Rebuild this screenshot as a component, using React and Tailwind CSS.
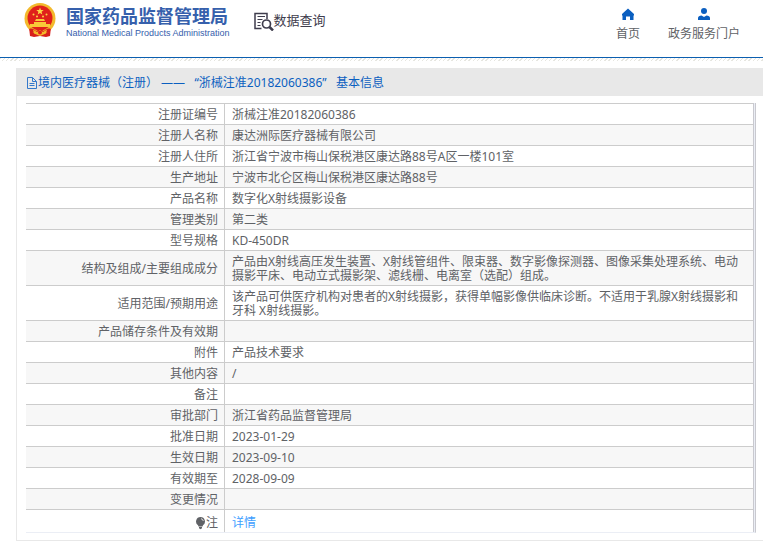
import React from "react";

const rows = [
  { label: "注册证编号", value: "浙械注准20182060386" },
  { label: "注册人名称", value: "康达洲际医疗器械有限公司" },
  { label: "注册人住所", value: "浙江省宁波市梅山保税港区康达路88号A区一楼101室" },
  { label: "生产地址", value: "宁波市北仑区梅山保税港区康达路88号" },
  { label: "产品名称", value: "数字化X射线摄影设备" },
  { label: "管理类别", value: "第二类" },
  { label: "型号规格", value: "KD-450DR" },
  {
    label: "结构及组成/主要组成成分",
    value:
      "产品由X射线高压发生装置、X射线管组件、限束器、数字影像探测器、图像采集处理系统、电动摄影平床、电动立式摄影架、滤线栅、电离室（选配）组成。",
  },
  {
    label: "适用范围/预期用途",
    value:
      "该产品可供医疗机构对患者的X射线摄影，获得单幅影像供临床诊断。不适用于乳腺X射线摄影和牙科 X射线摄影。",
  },
  { label: "产品储存条件及有效期", value: "" },
  { label: "附件", value: "产品技术要求" },
  { label: "其他内容", value: "/" },
  { label: "备注", value: "" },
  { label: "审批部门", value: "浙江省药品监督管理局" },
  { label: "批准日期", value: "2023-01-29" },
  { label: "生效日期", value: "2023-09-10" },
  { label: "有效期至", value: "2028-09-09" },
  { label: "变更情况", value: "" },
];

const Emblem = () => (
  <svg width="32" height="36" viewBox="0 0 32 36" aria-hidden="true">
    <path d="M5 24h22l-1 9-4 1-6-1-6 1-4-1z" fill="#d8201c" />
    <circle cx="16" cy="15.5" r="15.5" fill="#f3b92c" />
    <circle cx="16" cy="15" r="12.500" fill="#e0201b" />
    <path d="m16 4.500 1 2.500 2.700.1-2.100 1.700.7 2.600-2.300-1.500-2.300 1.500.7-2.600-2.100-1.700 2.700-.1z" fill="#fbd545" />
    <g fill="#fbd545">
      <circle cx="9.500" cy="11.500" r="1" />
      <circle cx="13" cy="13.500" r="1" />
      <circle cx="19" cy="13.500" r="1" />
      <circle cx="22.500" cy="11.500" r="1" />
    </g>
    <path d="M12 16h8l1 2H11zM10 19h12v2h4v3H6v-3h4z" fill="#f8c938" />
    <path d="M5 26c3-1 5 0 7 2l4-2 4 2c2-2 4-3 7-2l-2 4c-2-1-4 0-5 1l-4-2-4 2c-1-1-3-2-5-1z" fill="#d8201c" />
    <path d="M9 26.500 13 29l3-2 3 2 4-2.500-1 4-6 2.500-6-2.500z" fill="#f3b92c" />
    <circle cx="16" cy="29.500" r="2" fill="#df1f1b" />
  </svg>
);

const SearchDocIcon = () => (
  <svg width="20" height="20" viewBox="0 0 20 20" fill="none" stroke="#3f3d4d" aria-hidden="true">
    <path d="M7.500 17.500H1V2.500h12V8" strokeWidth="1.500" />
    <path d="M3.500 5.500h7.500M3.500 8.500h5M3.500 11.500h3M3.500 14.500h3" />
    <circle cx="12.500" cy="13" r="4" strokeWidth="1.700" />
    <path d="m15.500 16 3.500 3.500" strokeWidth="2.500" />
  </svg>
);

const HomeIcon = () => (
  <svg width="12" height="12" viewBox="0 0 12 12" fill="#0b5fc0" aria-hidden="true">
    <path d="M6 .5 0 6v1.500h.5V12H4V8.500h4V12h3.500V7.500h.5V6z" />
  </svg>
);

const UserIcon = () => (
  <svg width="12" height="12" viewBox="0 0 12 12" fill="#0b5fc0" aria-hidden="true">
    <circle cx="6" cy="3" r="3" />
    <path d="M0 12v-2C0 8.500 1.500 7.500 3.500 7.500L6 9l2.500-1.500c2 0 3.500 1 3.500 2.500v2z" />
  </svg>
);

const DocIcon = () => (
  <svg width="12" height="12" viewBox="0 0 12 12" fill="none" stroke="#3579cb" aria-hidden="true">
    <path d="M1.500.500h5l4 4v7h-9zM6.500.500v4h4M3.500 6.500h5M3.500 8.500h5" />
  </svg>
);

const BulbIcon = () => (
  <svg width="10" height="13" viewBox="0 0 10 13" fill="#606266" aria-hidden="true">
    <path d="M4.500 0A4.500 4.500 0 0 1 7 8.200L6.500 9.500h-4L2 8.200A4.500 4.500 0 0 1 4.500 0zM3 10h3v1.200l-1.500 1L3 11.200z" />
    <path d="M5 1.700A2.800 2.800 0 0 1 7.300 4" fill="none" stroke="#fff" strokeWidth=".8" />
  </svg>
);

const Header = () => (
  <header>
    <div className="flex h-[57px] items-start justify-between pr-[23px] pl-6">
      <div className="flex items-start">
        <a href="#" className="flex items-start gap-2.5 pt-[3px] text-[#3660ac]">
          <Emblem />
          <span className="flex flex-col pt-[3px] whitespace-nowrap">
            <span className="text-[18px] leading-5 font-bold">国家药品监督管理局</span>
            <span className="font-['Liberation_Sans',sans-serif] text-[9px] leading-[14px]">
              National Medical Products Administration
            </span>
          </span>
        </a>
        <h1 className="ml-6 flex items-start pt-[11px] text-[13px] leading-[18px] whitespace-nowrap text-[#3f3d4d]">
          <SearchDocIcon />
          数据查询
        </h1>
      </div>
      <nav className="flex gap-7 pt-2 whitespace-nowrap">
        <a href="#" className="flex flex-col items-center gap-[5px]">
          <HomeIcon />
          首页
        </a>
        <a href="#" className="flex flex-col items-center gap-[5px]">
          <UserIcon />
          政务服务门户
        </a>
      </nav>
    </div>
    <div className="h-1 border-t border-[#0b5fb0] bg-[repeating-linear-gradient(135deg,#e6e6e0_0_1px,#ffffff_1px_3px)]" />
  </header>
);

const App = () => {
  return (
    <div className="bg-white pb-1 font-['Noto_Sans','Noto_Sans_CJK_SC',sans-serif] text-[12px] leading-[18px] text-[#606266]">
      <Header />
      <main className="mt-[7px] ml-4 border-b border-l border-[#e8e8e8]">
        <h2 className="flex h-7 items-center bg-[#e8e8e8] pt-0.5 pl-[9px] whitespace-pre text-[#0b5fc0]">
          <DocIcon />
          {"境内医疗器械（注册） ——   “浙械注准20182060386”   基本信息"}
        </h2>
        <div className="mt-[7px] mr-[7px] mb-[7px] ml-[9px] border-r border-b border-r-[#c9c9cf] border-b-[#ebeef5] bg-[#ebeef5] pr-px">
          <table className="w-full table-fixed border-separate border-spacing-0 border-r border-[#c9c9cf] bg-white leading-[14px]">
            <tbody>
              {rows.map((row) => (
                <tr key={row.label} className="even:bg-[#f7f7f7]">
                  <th
                    scope="row"
                    className="w-[199px] border-t border-r border-[#ccc] pt-1 pr-1.5 pb-0.5 text-right font-normal"
                  >
                    {row.label}
                  </th>
                  <td className="border-t border-[#ccc] px-[7px] pt-1 pb-0.5">{row.value}</td>
                </tr>
              ))}
              <tr>
                <th
                  scope="row"
                  className="border-t border-r border-[#ccc] pt-1.5 pr-1.5 pb-0.5 text-right font-normal"
                >
                  <span className="flex items-center justify-end">
                    <BulbIcon />注
                  </span>
                </th>
                <td className="border-t border-[#ccc] px-[7px] pt-1.5 pb-0.5">
                  <a href="#" className="text-[#409eff]">
                    详情
                  </a>
                </td>
              </tr>
            </tbody>
          </table>
        </div>
      </main>
    </div>
  );
};

export default App;
